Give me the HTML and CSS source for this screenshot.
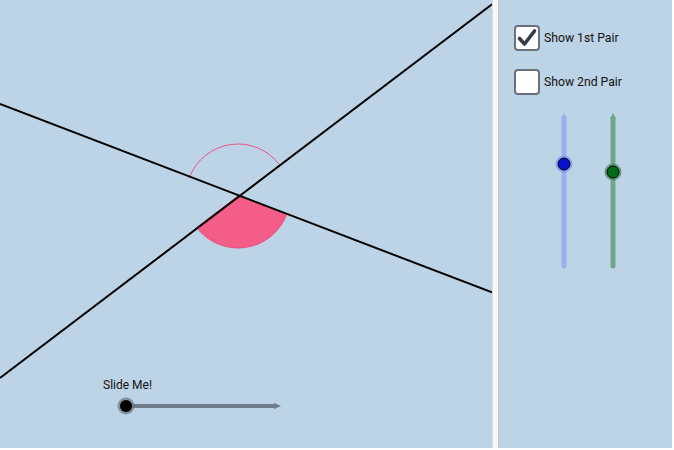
FILE: index.html
```html
<!DOCTYPE html>
<html>
<head>
<meta charset="utf-8">
<link rel="stylesheet" href="styles.css">
</head>
<body>
<div class="applet">
  <div class="graphics">
    <svg class="canvas" width="492" height="448" viewBox="0 0 492 448">
      <path class="sector" d="M238 196 L286.6 214.6 A52 52 0 0 1 196.6 227.4 Z"/>
      <path class="arc" d="M189.4 177.4 A52 52 0 0 1 279.4 164.6"/>
      <line class="ln" x1="0" y1="104" x2="492" y2="292.4"/>
      <line class="ln" x1="0" y1="378" x2="492" y2="4.2"/>
      <text class="label" x="103" y="389">Slide Me!</text>
      <line class="track" x1="126" y1="406" x2="276" y2="406"/>
      <path class="track-head" d="M274 403 L281 406 L274 409 Z"/>
      <circle class="halo-gray" cx="126" cy="406" r="8.5"/>
      <circle class="pt-black" cx="126" cy="406" r="6"/>
    </svg>
  </div>
  <div class="divider"></div>
  <div class="panel">
    <label class="row">
      <span class="box">
        <svg width="22" height="22" viewBox="0 0 22 22"><path class="tick" d="M3.5 11.5 L8.5 17 L18.5 4"/></svg>
      </span>
      <span class="cap">Show 1st Pair</span>
    </label>
    <label class="row">
      <span class="box"></span>
      <span class="cap">Show 2nd Pair</span>
    </label>
    <svg class="vsliders" width="173" height="170" viewBox="0 0 173 170">
      <line class="vt blue" x1="65" y1="12" x2="65" y2="160"/>
      <path class="head-blue" d="M62 13 L65 7 L68 13 Z"/>
      <circle class="halo-blue" cx="65" cy="58" r="8.5"/>
      <circle class="pt-blue" cx="65" cy="58" r="6"/>
      <line class="vt green" x1="114" y1="12" x2="114" y2="160"/>
      <path class="head-green" d="M111 13 L114 7 L117 13 Z"/>
      <circle class="halo-green" cx="114" cy="66" r="8.5"/>
      <circle class="pt-green" cx="114" cy="66" r="6"/>
    </svg>
  </div>
</div>
</body>
</html>
```
FILE: styles.css
```css
html, body {
  margin: 0;
  padding: 0;
  background: #ffffff;
}
body {
  font-family: Roboto, "Liberation Sans", sans-serif;
}
.applet {
  display: flex;
  width: 672px;
  height: 448px;
}
.graphics {
  width: 492px;
  height: 448px;
  background: #bdd4e7;
}
.canvas {
  display: block;
}
.divider {
  width: 7px;
  background: #f8f8f8;
  border-left: 1px solid #dedede;
  border-right: 1px solid #c8c8c8;
  box-sizing: border-box;
}
.panel {
  flex: 1;
  background: #bdd4e7;
  padding: 25px 0 0 15px;
  display: flex;
  flex-direction: column;
  gap: 18px;
}
.row {
  display: flex;
  align-items: center;
  gap: 4px;
  height: 26px;
}
.box {
  width: 26px;
  height: 26px;
  box-sizing: border-box;
  border: 2px solid #69727c;
  border-radius: 4px;
  background: #ffffff;
  display: flex;
  align-items: center;
  justify-content: center;
}
.box svg {
  display: block;
}
.tick {
  fill: none;
  stroke: #333c45;
  stroke-width: 3.6;
  stroke-linecap: round;
  stroke-linejoin: round;
}
.cap {
  font-size: 12.2px;
  color: #111111;
}
.vsliders {
  display: block;
  margin-left: -15px;
  margin-top: -7px;
}
.ln {
  stroke: #000000;
  stroke-width: 2;
}
.sector {
  fill: #f35d88;
  stroke: #ec4f7e;
  stroke-width: 1;
}
.arc {
  fill: none;
  stroke: #ee5583;
  stroke-width: 1;
}
.label {
  font-family: Roboto, "Liberation Sans", sans-serif;
  font-size: 12px;
  fill: #111111;
}
.track {
  stroke: #6e7b88;
  stroke-width: 4;
}
.track-head {
  fill: #6e7b88;
}
.halo-gray {
  fill: #6e7b88;
  opacity: 0.75;
}
.pt-black {
  fill: #000000;
}
.vt {
  stroke-width: 5;
  stroke-linecap: round;
}
.blue {
  stroke: #9badea;
}
.green {
  stroke: #6fa68c;
}
.head-blue {
  fill: #9badea;
}
.head-green {
  fill: #6fa68c;
}
.halo-blue {
  fill: #8297ec;
  opacity: 0.8;
}
.pt-blue {
  fill: #0d11cc;
  stroke: #000000;
  stroke-width: 1;
}
.halo-green {
  fill: #4f8c6c;
  opacity: 0.8;
}
.pt-green {
  fill: #006a16;
  stroke: #000000;
  stroke-width: 1;
}
```
